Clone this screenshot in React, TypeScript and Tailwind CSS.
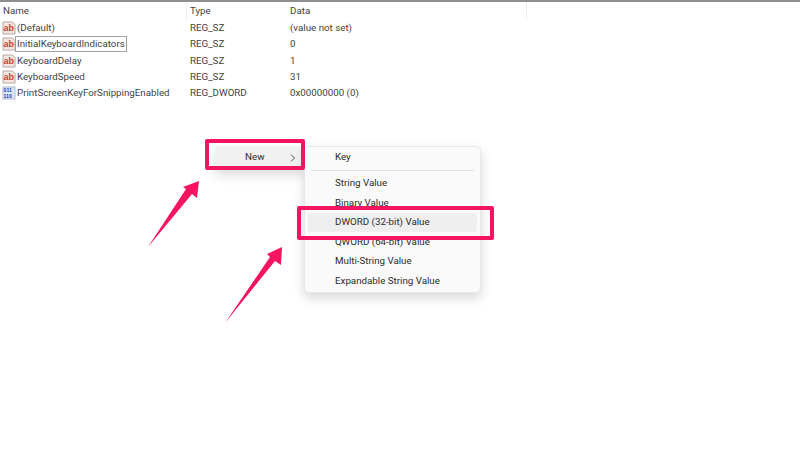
const font = { fontFamily: 'Roboto, "Open Sans", sans-serif' };

const rows = [
  { name: '(Default)', type: 'REG_SZ', data: '(value not set)', icon: 'ab' },
  { name: 'InitialKeyboardIndicators', type: 'REG_SZ', data: '0', icon: 'ab', editing: true },
  { name: 'KeyboardDelay', type: 'REG_SZ', data: '1', icon: 'ab' },
  { name: 'KeyboardSpeed', type: 'REG_SZ', data: '31', icon: 'ab' },
  { name: 'PrintScreenKeyForSnippingEnabled', type: 'REG_DWORD', data: '0x00000000 (0)', icon: 'bin' },
];

function StringIcon() {
  return (
    <svg width="14" height="14" viewBox="0 0 14 14" className="shrink-0">
      <path d="M1 1h9.5l2.5 2.5v9.5h-12z" fill="#f6e6df" stroke="#b3a9a8" strokeWidth="1" />
      <text x="1.6" y="10" fontSize="9" fontWeight="700" fill="#cf3f2a" fontFamily="Liberation Sans, sans-serif">ab</text>
    </svg>
  );
}

function BinaryIcon() {
  return (
    <svg width="14" height="14" viewBox="0 0 14 14" className="shrink-0">
      <rect x="1" y="1" width="12" height="12" fill="#dfe6f6" stroke="#b4bcd8" strokeWidth="1" />
      <text x="1.5" y="6" fontSize="5.2" fontWeight="700" fill="#2a48b8" fontFamily="Liberation Sans, sans-serif">011</text>
      <text x="1.5" y="12" fontSize="5.2" fontWeight="700" fill="#2a48b8" fontFamily="Liberation Sans, sans-serif">110</text>
    </svg>
  );
}

function RegistryTable() {
  return (
    <div className="text-[9.75px] leading-[16.3px] text-[#3f3f3f]">
      <div className="h-[2px] w-full bg-[#8f8f8f]" />
      <div className="flex h-[17px] items-center pt-px">
        <div className="w-[186px] pl-[3px]">Name</div>
        <div className="w-[100px] border-l border-[#ececec] pl-[3px]">Type</div>
        <div className="w-[241px] border-r border-[#ececec] pl-[4px]">Data</div>
      </div>
      <div className="mt-[1px]">
        {rows.map((r) => (
          <div key={r.name} className="flex h-[16.3px] items-center">
            <div className="flex w-[187px] items-center pl-[2px]">
              {r.icon === 'ab' ? <StringIcon /> : <BinaryIcon />}
              <span className={r.editing ? '-my-px -ml-px border border-[#a0a0a0] px-[1px] leading-[14px]' : 'ml-px'}>{r.name}</span>
            </div>
            <div className="w-[100px] pl-[3px]">{r.type}</div>
            <div className="pl-[3px]">{r.data}</div>
          </div>
        ))}
      </div>
    </div>
  );
}

function MenuItem({ label, active }: { label: string; active?: boolean }) {
  return (
    <div className={`mx-[3px] flex h-[19.6px] items-center rounded-[3px] pl-[27px] ${active ? 'bg-[#efefef]' : ''}`}>
      {label}
    </div>
  );
}

function ContextMenus() {
  return (
    <>
      <div className="absolute left-[215px] top-[146px] flex h-[23px] w-[89px] items-center rounded-[4px] bg-[#f1f1f1] pl-[30px] text-[9.75px] text-[#2b2b2b] shadow-[0_6px_12px_rgba(0,0,0,0.14)]">
        New
        <svg width="6" height="8" viewBox="0 0 6 8" className="ml-[26px]">
          <path d="M1 0.5 4.5 4 1 7.5" fill="none" stroke="#555" strokeWidth="1" />
        </svg>
      </div>
      <div className="absolute left-[304px] top-[146px] w-[177px] rounded-[5px] border border-[#e8e8e8] bg-[#fafafa] py-px text-[9.75px] text-[#2b2b2b] shadow-[0_5px_12px_rgba(0,0,0,0.16)]">
        <MenuItem label="Key" />
        <div className="mx-[6px] mb-[3px] mt-[2px] h-px bg-[#e2e2e2]" />
        <MenuItem label="String Value" />
        <MenuItem label="Binary Value" />
        <MenuItem label="DWORD (32-bit) Value" active />
        <MenuItem label="QWORD (64-bit) Value" />
        <MenuItem label="Multi-String Value" />
        <MenuItem label="Expandable String Value" />
      </div>
    </>
  );
}

function Annotations() {
  return (
    <>
      <div className="absolute left-[205px] top-[139px] h-[31px] w-[100px] rounded-[2px] border-[4px] border-[#f5145f]" />
      <div className="absolute left-[297px] top-[206px] h-[34px] w-[197px] rounded-[2px] border-[4px] border-[#f5145f]" />
      <svg className="absolute left-0 top-0" width="800" height="456" viewBox="0 0 800 456">
        <path d="M199 181 L197 198 L192 194 L148 247 L186 189 L183 187 Z" fill="#f5145f" />
        <path d="M282 247 L281 265 L275 261 L225 323 L270 257 L267 254 Z" fill="#f5145f" />
      </svg>
    </>
  );
}

export default function App() {
  return (
    <div className="relative h-[456px] w-[800px] overflow-hidden bg-white" style={font}>
      <RegistryTable />
      <ContextMenus />
      <Annotations />
    </div>
  );
}
